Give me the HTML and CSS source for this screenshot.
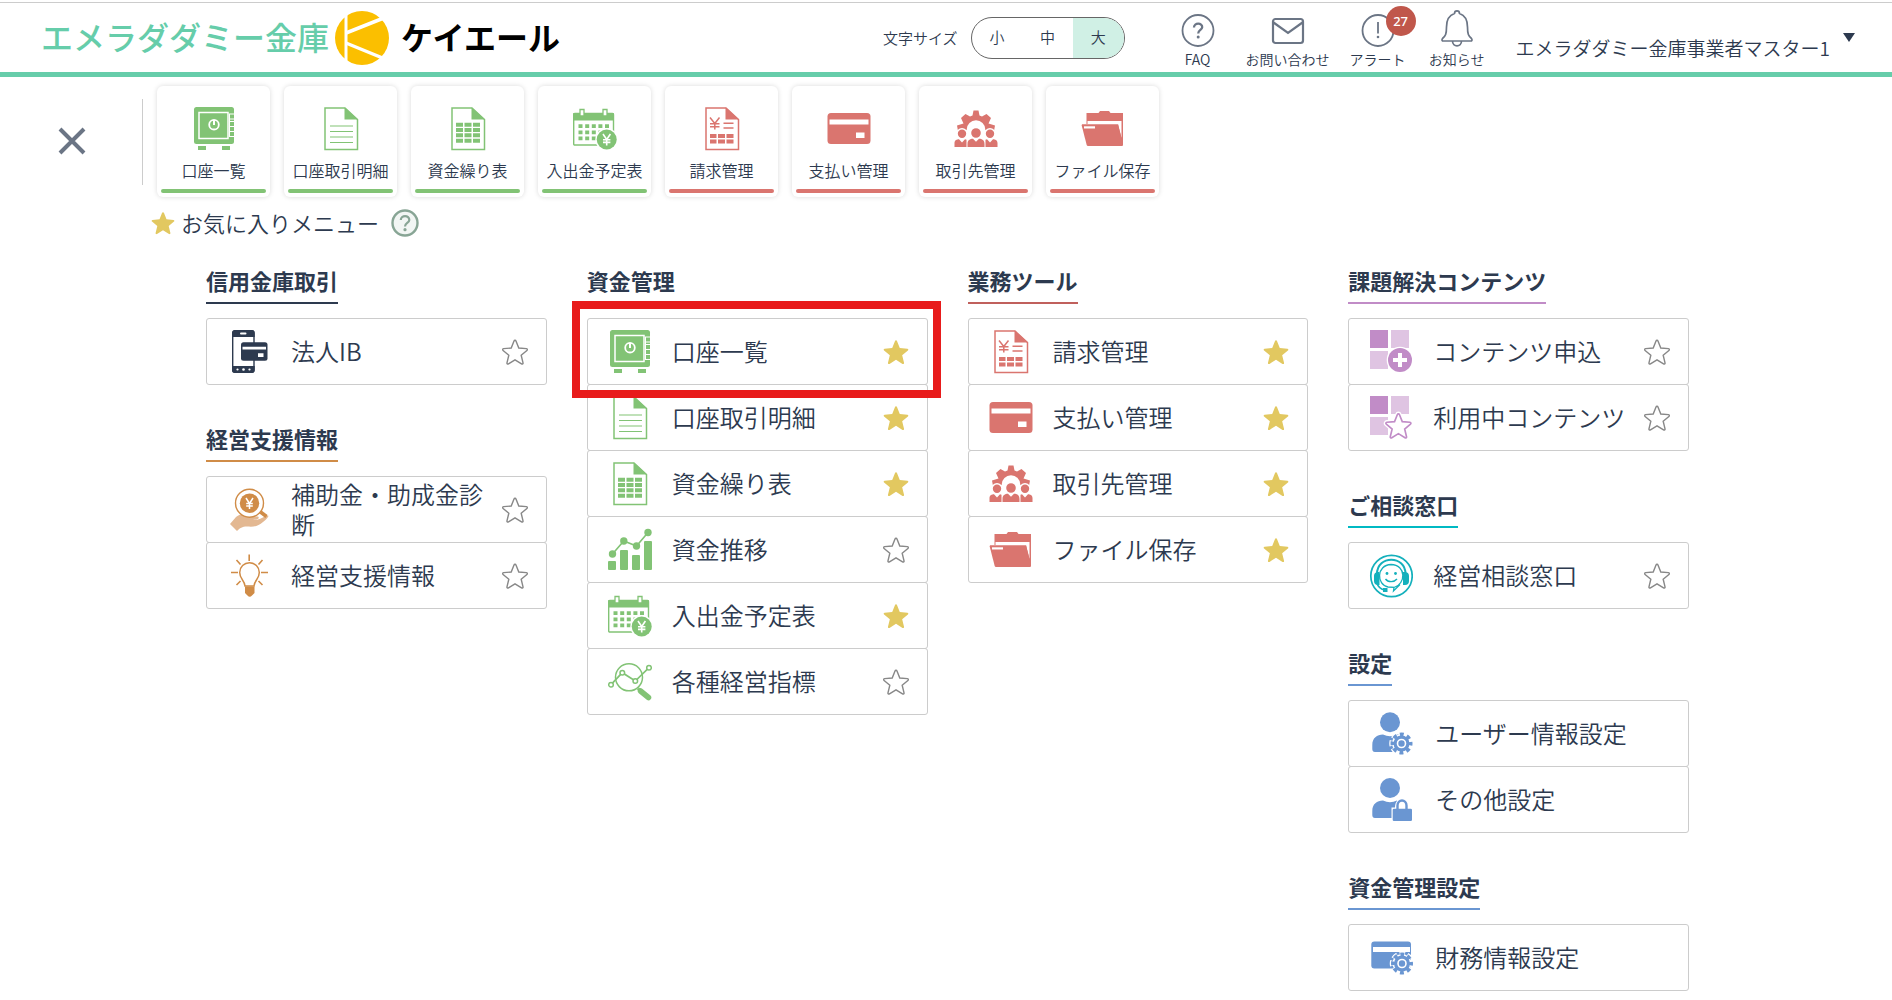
FILE: index.html
```html
<!DOCTYPE html>
<html lang="ja">
<head>
<meta charset="utf-8">
<title>ケイエール</title>
<meta name="viewport" content="width=device-width, initial-scale=1">
<link rel="stylesheet" href="styles.css">
</head>
<body>
<svg class="sprite" aria-hidden="true">
  <defs>
    <g id="sheet">
      <path d="M6 1H26L38.500 12.500V42.500H6Z" fill="#fff" stroke="currentColor" stroke-width="1.500"/>
      <path d="M25.500 0.500V12.500H39Z" fill="currentColor"/>
    </g>
    <g id="gear">
      <circle r="9.500" fill="#fff"/>
      <circle r="9.500" fill="none" stroke="#fff" stroke-width="5.500" stroke-dasharray="5 2.460" stroke-dashoffset="2.500"/>
      <circle r="8" fill="currentColor"/>
      <circle r="9" fill="none" stroke="currentColor" stroke-width="4" stroke-dasharray="3.800 3.268" stroke-dashoffset="1.900"/>
      <circle r="4" fill="none" stroke="#fff" stroke-width="1.600"/>
    </g>
    <path id="star-shape" d="M12 1.200C12.500 1.200 12.800 1.500 13 2L15.500 8.300L22.500 8.900C23.400 9 23.700 10 23 10.600L17.700 15L19.400 22C19.600 22.900 18.800 23.400 18 23L12 19.200L6 23C5.200 23.400 4.400 22.900 4.600 22L6.300 15L1 10.600C0.300 10 0.600 9 1.500 8.900L8.500 8.300L11 2C11.200 1.500 11.500 1.200 12 1.200Z"/>
  </defs>
  <symbol id="i-safe" viewBox="0 0 44 44">
    <path d="M6 39H14V43H6ZM30 39H38V43H30Z" fill="currentColor"/>
    <rect x="2" y="0" width="40" height="37" rx="2.500" fill="currentColor"/>
    <rect x="7" y="5.500" width="29" height="26" fill="none" stroke="#fff" stroke-width="1.500"/>
    <path d="M37 7H42M37 12H42M37 14.500H42M37 19.500H42M37 24.500H42M37 29.500H42M37.500 7V29.500" stroke="#fff" stroke-width="1"/>
    <circle cx="22" cy="17.700" r="4.800" fill="none" stroke="#fff" stroke-width="1.800"/>
    <path d="M22 13V18" stroke="#fff" stroke-width="2"/>
  </symbol>
  <symbol id="i-statement" viewBox="0 0 44 44">
    <use href="#sheet"/>
    <path d="M11 19H34M11 24.500H34M11 30H34M11 35.500H34" stroke="currentColor" stroke-width="1.200"/>
  </symbol>
  <symbol id="i-table" viewBox="0 0 44 44">
    <use href="#sheet"/>
    <path d="M10 15.700h7v4h-7zM18.500 15.700h7v4h-7zM27 15.700h7v4h-7zM10 21h7v4h-7zM18.500 21h7v4h-7zM27 21h7v4h-7zM10 26.300h7v4h-7zM18.500 26.300h7v4h-7zM27 26.300h7v4h-7zM10 31.700h7v4h-7zM18.500 31.700h7v4h-7zM27 31.700h7v4h-7z" fill="currentColor"/>
  </symbol>
  <symbol id="i-invoice" viewBox="0 0 44 44">
    <use href="#sheet"/>
    <path d="M10 10.500L14.800 16.500L19.500 10.500M14.800 16.500V22.500M10 16.800H19.500M10 19.800H19.500" fill="none" stroke="currentColor" stroke-width="1.500"/>
    <path d="M23.500 16.200H33.500M23.500 21H33.500" stroke="currentColor" stroke-width="1.400"/>
    <path d="M10 27h6.500v4h-6.500zM18 27h7v4h-7zM26.500 27h7v4h-7zM10 32.500h6.500v4h-6.500zM18 32.500h7v4h-7zM26.500 32.500h7v4h-7z" fill="currentColor"/>
  </symbol>
  <symbol id="i-calendar" viewBox="0 0 44 44">
    <rect x="0.700" y="6.500" width="39.800" height="31.500" rx="1" fill="#fff" stroke="currentColor" stroke-width="1.400"/>
    <rect x="0" y="6" width="41" height="7.500" rx="1" fill="currentColor"/>
    <path d="M7 2.500h4v6.500h-4zM30 2.500h4v6.500h-4z" fill="#fff" stroke="currentColor" stroke-width="1.300"/>
    <path d="M5.500 17.200h4v3.800h-4zM12.200 17.200h4v3.800h-4zM18.800 17.200h4v3.800h-4zM25.400 17.200h4v3.800h-4zM32 17.200h4v3.800h-4zM5.500 23.500h4v3.800h-4zM12.200 23.500h4v3.800h-4zM18.800 23.500h4v3.800h-4zM25.400 23.500h4v3.800h-4zM5.500 29.500h4v3.800h-4zM12.200 29.500h4v3.800h-4zM18.800 29.500h4v3.800h-4z" fill="currentColor"/>
    <circle cx="33.700" cy="32.500" r="11.300" fill="#fff"/>
    <circle cx="33.700" cy="32.500" r="10" fill="currentColor"/>
    <path d="M30 27L33.700 32.500L37.400 27M33.700 32.500V38.500M30 32.700H37.400M30 35.400H37.400" fill="none" stroke="#fff" stroke-width="1.600"/>
  </symbol>
  <symbol id="i-trend" viewBox="0 0 44 44">
    <g fill="currentColor">
      <rect x="0" y="33" width="8" height="9" rx="1"/><rect x="12" y="22" width="8" height="20" rx="1"/>
      <rect x="24" y="27" width="8" height="15" rx="1"/><rect x="36" y="13" width="8" height="29" rx="1"/>
      <circle cx="4.500" cy="26" r="3.700"/><circle cx="15.800" cy="13" r="3.700"/><circle cx="28.500" cy="18" r="3.700"/><circle cx="40" cy="4.500" r="3.700"/>
    </g>
    <path d="M4.500 26L15.800 13L28.500 18L40 4.500" fill="none" stroke="currentColor" stroke-width="1.600"/>
  </symbol>
  <symbol id="i-analysis" viewBox="0 0 44 44">
    <circle cx="21" cy="17.300" r="13.500" fill="none" stroke="currentColor" stroke-width="1.500"/>
    <path d="M30 28.500L33 31.500" stroke="currentColor" stroke-width="3"/>
    <path d="M32.500 31L40.500 37.500" stroke="currentColor" stroke-width="5.500" stroke-linecap="round"/>
    <path d="M3 24.700L14.300 12.700L27.300 21L41 7.700" fill="none" stroke="currentColor" stroke-width="1.700"/>
    <g fill="#fff" stroke="currentColor" stroke-width="1.500"><circle cx="3" cy="24.700" r="2.300"/><circle cx="14.300" cy="12.700" r="2.300"/><circle cx="27.300" cy="21" r="2.300"/><circle cx="41" cy="7.700" r="2.300"/></g>
  </symbol>
  <symbol id="i-card" viewBox="0 0 44 44">
    <rect x="0.500" y="6" width="43" height="31" rx="3.500" fill="currentColor"/>
    <path d="M2.500 12.500H41.500V17.500H2.500ZM29 25.500H37.500V31H29Z" fill="#fff"/>
  </symbol>
  <symbol id="i-team" viewBox="0 0 44 44">
    <path d="M4 24L3 18.500L9.500 16.500L7 11L11.500 7L16 9.500L18.500 8.500L19.500 3.500H24.500L25.500 8.500L28 9.500L32.500 7L37 11L34.500 16.500L41 18.500L40 24Z" fill="currentColor"/>
    <circle cx="22" cy="22.500" r="9.300" fill="#fff"/>
    <rect x="0" y="23" width="44" height="21" fill="#fff"/>
    <g fill="currentColor" stroke="#fff" stroke-width="1.600">
      <circle cx="8" cy="26.800" r="5"/><circle cx="36" cy="26.800" r="5"/><circle cx="22" cy="26" r="5.600"/>
    </g>
    <g fill="currentColor">
      <path d="M0.500 40V36C0.500 33 3 32.500 5 32.300L8 35.500L11 32.300L12.500 32.800V40Z"/>
      <path d="M31.500 40V32.800L33 32.300L36 35.500L39 32.300C41 32.500 43.500 33 43.500 36V40Z"/>
      <path d="M13.500 40V37C13.500 33 16 32 19 31.800L22 34.800L25 31.800C28 32 30.500 33 30.500 37V40Z"/>
    </g>
  </symbol>
  <symbol id="i-folder" viewBox="0 0 44 44">
    <path d="M5.500 17V6H17.500L19 4H28L29.500 6H42V38Q42 39 41 39H37V17Z" fill="currentColor"/>
    <path d="M6.500 14H40.500V31L37 17H6.500Z" fill="#fff"/>
    <path d="M1 17.300H37L41 33V39H7Q6 39 5.700 38L0.700 18.500Z" fill="currentColor"/>
    <path d="M3 19.300H14V21.500H3Z" fill="#fff"/>
  </symbol>
  <symbol id="i-phone" viewBox="0 0 44 44">
    <rect x="5.700" y="0.700" width="21.300" height="41.600" rx="2.500" fill="#fff" stroke="currentColor" stroke-width="1.400"/>
    <path d="M5 7V3Q5 0 8 0H24.700Q27.700 0 27.700 3V7ZM5 36V40Q5 43 8 43H24.700Q27.700 43 27.700 40V36Z" fill="currentColor"/>
    <rect x="13" y="2.500" width="6.500" height="2" rx="1" fill="#fff"/>
    <circle cx="10.500" cy="39.500" r="1.100" fill="#fff"/><circle cx="16.500" cy="39.500" r="1.300" fill="#fff"/><circle cx="22.500" cy="39.500" r="1.100" fill="#fff"/>
    <rect x="14" y="12.300" width="26.500" height="18.500" rx="2.500" fill="currentColor"/>
    <path d="M15.500 16.700H39V19.500H15.500ZM31 23.300H36.500V27H31Z" fill="#fff"/>
  </symbol>
  <symbol id="i-subsidy" viewBox="0 0 44 44">
    <path d="M3 36L9 29C14 25 20 26 23 28.500H31C33 30 31 32 26 31.500C32 33 36 28.500 41 27.500C42.500 28 40 31 36 34C31 38.500 27 39 20 38.500C15 38.500 13 40 10 43Z" fill="#e3b892"/>
    <circle cx="22.500" cy="15.200" r="14" fill="#fff" stroke="currentColor" stroke-width="1.400"/>
    <path d="M33.500 24L39.500 28.500" stroke="currentColor" stroke-width="3.600"/>
    <circle cx="22.500" cy="15.200" r="9.700" fill="currentColor"/>
    <path d="M19 10L22.500 15.500L26 10M22.500 15.500V21M19.200 15.500H25.800M19.200 18H25.800" fill="none" stroke="#fff" stroke-width="1.500"/>
  </symbol>
  <symbol id="i-bulb" viewBox="0 0 44 44">
    <path d="M18 32C17.500 26 12.700 25 12.700 18.500A9.800 9.800 0 0 1 32.300 18.500C32.300 25 27.500 26 27 32Z" fill="none" stroke="currentColor" stroke-width="1.500"/>
    <path d="M18 32.500H27.500V39L25 41.500Q22.700 44 20.500 41.500L18 39Z" fill="currentColor"/>
    <path d="M22.200 0.500V7M4 18.500H11M34 18.500H41M9.500 6L13.500 10.500M35.500 6L31.500 10.500M9.500 31L13.500 27M35.500 31L31.500 27" stroke="currentColor" stroke-width="1.600"/>
  </symbol>
  <symbol id="i-apply" viewBox="0 0 44 44">
    <path d="M1 0H19V18H1Z" fill="currentColor"/><path d="M22 0H40V18H22ZM1 21H19V39H1Z" fill="#dfc4e2"/>
    <circle cx="31" cy="30" r="13.300" fill="#fff"/><circle cx="31" cy="30" r="12" fill="currentColor"/>
    <path d="M31 23V37M24 30H38" stroke="#fff" stroke-width="4"/>
  </symbol>
  <symbol id="i-inuse" viewBox="0 0 44 44">
    <path d="M1 0H19V18H1Z" fill="currentColor"/><path d="M22 0H40V18H22ZM1 21H19V39H1Z" fill="#dfc4e2"/>
    <use href="#star-shape" transform="translate(16.200 16.500) scale(1.100)" fill="#fff" stroke="#fff" stroke-width="4"/>
    <use href="#star-shape" transform="translate(16.200 16.500) scale(1.100)" fill="#fff" stroke="currentColor" stroke-width="1.500"/>
  </symbol>
  <symbol id="i-consult" viewBox="0 0 44 44">
    <g fill="none" stroke="currentColor">
      <circle cx="22.500" cy="22" r="20.700" stroke-width="1.700"/>
      <path d="M8 20C8 1 36.500 1 36.500 20" stroke-width="2"/>
      <path d="M25 33.500C37 30 37.500 11 22 10.500C7 11 7.500 31 19 33L25 33.300L24.500 37L31 30.500" stroke-width="1.300"/>
      <path d="M16.500 25C19 28.500 25 28.500 28 25" stroke-width="1.400"/>
      <path d="M7.500 28C9 33 12 35.500 16 36" stroke-width="1.600"/>
    </g>
    <path d="M10.500 18H8.500Q5 18.500 5 22V27Q5 31 9 31H10.500ZM34 18H36.500Q40 18.500 40 22V27Q40 31 36 31H34Z" fill="currentColor"/>
    <rect x="14" y="34" width="4.500" height="4" fill="currentColor"/>
    <circle cx="18" cy="19.500" r="1.400" fill="currentColor"/><circle cx="26.500" cy="19.500" r="1.400" fill="currentColor"/>
  </symbol>
  <symbol id="i-user" viewBox="0 0 44 44">
    <circle cx="21" cy="10.300" r="10" fill="currentColor"/>
    <path d="M3.300 37V33C3.300 26 8 22.500 14 22.500Q21 26 28 22.500C34 23 36 27 36 31V40H6Q3.300 40 3.300 37Z" fill="currentColor"/>
    <use href="#gear" transform="translate(32.500 31.500)"/>
  </symbol>
  <symbol id="i-lock" viewBox="0 0 44 44">
    <circle cx="21" cy="10" r="10" fill="currentColor"/>
    <path d="M3.300 37V33C3.300 26 8 22.500 14 22.500Q21 26 28 22.500V40H6Q3.300 40 3.300 37Z" fill="currentColor"/>
    <path d="M22.500 44V29.500H26C26 17.500 40 17.500 40 29.500H44V44Z" fill="#fff"/>
    <rect x="23.700" y="30.700" width="19.300" height="12.300" rx="1.200" fill="currentColor"/>
    <path d="M28.500 31V27.500C28.500 20.800 37.500 20.800 37.500 27.500V31" fill="none" stroke="currentColor" stroke-width="2.400"/>
  </symbol>
  <symbol id="i-finance" viewBox="0 0 44 44">
    <rect x="2.300" y="5.500" width="39.700" height="27" rx="3" fill="currentColor"/>
    <path d="M4 11H41V16H4Z" fill="#fff"/>
    <use href="#gear" transform="translate(33 27.500)"/>
  </symbol>
  <symbol id="i-star" viewBox="0 0 24 24"><use href="#star-shape"/></symbol>
</svg>

<header class="topbar">
  <div class="brand">
    <span class="brand-bank">エメラダダミー金庫</span>
    <svg class="brand-mark" viewBox="0 0 54 54" aria-hidden="true">
      <circle cx="27" cy="27" r="27" fill="#fbbf00"/>
      <path d="M11 0V54" stroke="#fff" stroke-width="3"/>
      <path d="M11 22L50 6.500M11 32L50 48" stroke="#fff" stroke-width="3.500"/>
    </svg>
    <span class="brand-name">ケイエール</span>
  </div>
  <fieldset class="textsize">
    <legend class="textsize-label">文字サイズ</legend>
    <div class="textsize-group">
      <label class="textsize-option"><input type="radio" name="size"><span>小</span></label>
      <label class="textsize-option"><input type="radio" name="size"><span>中</span></label>
      <label class="textsize-option"><input type="radio" name="size" checked><span>大</span></label>
    </div>
  </fieldset>
  <nav class="tools">
    <a class="tool" href="#faq">
      <svg class="tool-icon" viewBox="0 0 38 38"><circle cx="19" cy="20.500" r="15.500" fill="none" stroke="currentColor" stroke-width="1.800"/><path d="M15 17.500C15 12.500 23.500 12.500 23.200 17.300C23 20 19.200 19.800 19.200 23.500" fill="none" stroke="currentColor" stroke-width="2.300"/><circle cx="19.200" cy="27" r="1.500" fill="currentColor"/></svg>
      <span>FAQ</span></a>
    <a class="tool" href="#contact">
      <svg class="tool-icon" viewBox="0 0 38 38"><rect x="4" y="9" width="30" height="24" rx="2.500" fill="none" stroke="currentColor" stroke-width="2.200"/><path d="M4.500 12.500L19 23L33.500 12.500" fill="none" stroke="currentColor" stroke-width="2.200"/></svg>
      <span>お問い合わせ</span></a>
    <a class="tool" href="#alert">
      <svg class="tool-icon" viewBox="0 0 38 38"><circle cx="19" cy="20.500" r="15.500" fill="none" stroke="currentColor" stroke-width="1.800"/><path d="M19 12V23.500" stroke="currentColor" stroke-width="1.800"/><circle cx="19" cy="27" r="1.300" fill="currentColor"/></svg>
      <span>アラート</span><b class="badge">27</b></a>
    <a class="tool" href="#news">
      <svg class="tool-icon" viewBox="0 0 38 38"><path d="M16.500 3.500C16.500 0 21.500 0 21.500 3.500C27.500 5.500 29.500 10 29.500 17C29.500 24 30.500 26 33.500 28.500C34.500 30 34 31 32.500 31H5.500C4 31 3.500 30 4.500 28.500C7.500 26 8.500 24 8.500 17C8.500 10 10.500 5.500 16.500 3.500ZM14.500 31C14.500 37.500 23.500 37.500 23.500 31" fill="none" stroke="currentColor" stroke-width="1.700"/></svg>
      <span>お知らせ</span></a>
  </nav>
  <button class="account" type="button"><span class="account-name">エメラダダミー金庫事業者マスター1</span><span class="caret"></span></button>
</header>

<main>
  <section class="shortcuts">
    <button class="close" type="button" aria-label="閉じる"><svg viewBox="0 0 28 28"><path d="M2 2L26 26M26 2L2 26" stroke="currentColor" stroke-width="4"/></svg></button>
    <nav class="cards">
      <a class="card green" href="#accounts"><svg><use href="#i-safe"/></svg><span class="card-label">口座一覧</span></a>
      <a class="card green" href="#statements"><svg><use href="#i-statement"/></svg><span class="card-label">口座取引明細</span></a>
      <a class="card green" href="#cashflow"><svg><use href="#i-table"/></svg><span class="card-label">資金繰り表</span></a>
      <a class="card green" href="#schedule"><svg><use href="#i-calendar"/></svg><span class="card-label">入出金予定表</span></a>
      <a class="card red" href="#invoices"><svg><use href="#i-invoice"/></svg><span class="card-label">請求管理</span></a>
      <a class="card red" href="#payments"><svg><use href="#i-card"/></svg><span class="card-label">支払い管理</span></a>
      <a class="card red" href="#partners"><svg><use href="#i-team"/></svg><span class="card-label">取引先管理</span></a>
      <a class="card red" href="#files"><svg><use href="#i-folder"/></svg><span class="card-label">ファイル保存</span></a>
    </nav>
  </section>

  <div class="favorites">
    <svg class="favorites-star" aria-hidden="true"><use href="#i-star"/></svg>
    <span class="favorites-title">お気に入りメニュー</span>
    <button class="help" type="button" aria-label="ヘルプ"><svg viewBox="0 0 28 28"><circle cx="14" cy="14" r="12.500" fill="#f2f6f4" stroke="currentColor" stroke-width="2.400"/><path d="M9.800 11C9.800 5.800 18.500 5.800 18.300 11C18.200 14 14 14 14 17.500" fill="none" stroke="currentColor" stroke-width="2.200"/><circle cx="14" cy="20.700" r="1.600" fill="currentColor"/></svg></button>
  </div>

  <div class="menu">
    <div class="column">
      <section class="group navy">
        <h2>信用金庫取引</h2>
        <ul>
          <li><a href="#ib"><svg><use href="#i-phone"/></svg><span>法人IB</span></a><button class="fav" type="button" aria-label="お気に入り" aria-pressed="false"><svg><use href="#i-star"/></svg></button></li>
        </ul>
      </section>
      <section class="group orange">
        <h2>経営支援情報</h2>
        <ul>
          <li><a href="#subsidy"><svg><use href="#i-subsidy"/></svg><span>補助金・助成金診断</span></a><button class="fav" type="button" aria-label="お気に入り" aria-pressed="false"><svg><use href="#i-star"/></svg></button></li>
          <li><a href="#support"><svg><use href="#i-bulb"/></svg><span>経営支援情報</span></a><button class="fav" type="button" aria-label="お気に入り" aria-pressed="false"><svg><use href="#i-star"/></svg></button></li>
        </ul>
      </section>
    </div>
    <div class="column">
      <section class="group green">
        <h2>資金管理</h2>
        <ul>
          <li class="highlight"><a href="#accounts"><svg><use href="#i-safe"/></svg><span>口座一覧</span></a><button class="fav" type="button" aria-label="お気に入り" aria-pressed="true"><svg><use href="#i-star"/></svg></button></li>
          <li><a href="#statements"><svg><use href="#i-statement"/></svg><span>口座取引明細</span></a><button class="fav" type="button" aria-label="お気に入り" aria-pressed="true"><svg><use href="#i-star"/></svg></button></li>
          <li><a href="#cashflow"><svg><use href="#i-table"/></svg><span>資金繰り表</span></a><button class="fav" type="button" aria-label="お気に入り" aria-pressed="true"><svg><use href="#i-star"/></svg></button></li>
          <li><a href="#trend"><svg><use href="#i-trend"/></svg><span>資金推移</span></a><button class="fav" type="button" aria-label="お気に入り" aria-pressed="false"><svg><use href="#i-star"/></svg></button></li>
          <li><a href="#schedule"><svg><use href="#i-calendar"/></svg><span>入出金予定表</span></a><button class="fav" type="button" aria-label="お気に入り" aria-pressed="true"><svg><use href="#i-star"/></svg></button></li>
          <li><a href="#indicators"><svg><use href="#i-analysis"/></svg><span>各種経営指標</span></a><button class="fav" type="button" aria-label="お気に入り" aria-pressed="false"><svg><use href="#i-star"/></svg></button></li>
        </ul>
      </section>
    </div>
    <div class="column">
      <section class="group red">
        <h2>業務ツール</h2>
        <ul>
          <li><a href="#invoices"><svg><use href="#i-invoice"/></svg><span>請求管理</span></a><button class="fav" type="button" aria-label="お気に入り" aria-pressed="true"><svg><use href="#i-star"/></svg></button></li>
          <li><a href="#payments"><svg><use href="#i-card"/></svg><span>支払い管理</span></a><button class="fav" type="button" aria-label="お気に入り" aria-pressed="true"><svg><use href="#i-star"/></svg></button></li>
          <li><a href="#partners"><svg><use href="#i-team"/></svg><span>取引先管理</span></a><button class="fav" type="button" aria-label="お気に入り" aria-pressed="true"><svg><use href="#i-star"/></svg></button></li>
          <li><a href="#files"><svg><use href="#i-folder"/></svg><span>ファイル保存</span></a><button class="fav" type="button" aria-label="お気に入り" aria-pressed="true"><svg><use href="#i-star"/></svg></button></li>
        </ul>
      </section>
    </div>
    <div class="column">
      <section class="group purple">
        <h2>課題解決コンテンツ</h2>
        <ul>
          <li><a href="#apply"><svg><use href="#i-apply"/></svg><span>コンテンツ申込</span></a><button class="fav" type="button" aria-label="お気に入り" aria-pressed="false"><svg><use href="#i-star"/></svg></button></li>
          <li><a href="#inuse"><svg><use href="#i-inuse"/></svg><span>利用中コンテンツ</span></a><button class="fav" type="button" aria-label="お気に入り" aria-pressed="false"><svg><use href="#i-star"/></svg></button></li>
        </ul>
      </section>
      <section class="group teal">
        <h2>ご相談窓口</h2>
        <ul>
          <li><a href="#consult"><svg><use href="#i-consult"/></svg><span>経営相談窓口</span></a><button class="fav" type="button" aria-label="お気に入り" aria-pressed="false"><svg><use href="#i-star"/></svg></button></li>
        </ul>
      </section>
      <section class="group blue">
        <h2>設定</h2>
        <ul>
          <li><a href="#user"><svg><use href="#i-user"/></svg><span>ユーザー情報設定</span></a></li>
          <li><a href="#other"><svg><use href="#i-lock"/></svg><span>その他設定</span></a></li>
        </ul>
      </section>
      <section class="group blue">
        <h2>資金管理設定</h2>
        <ul>
          <li><a href="#finance"><svg><use href="#i-finance"/></svg><span>財務情報設定</span></a></li>
        </ul>
      </section>
    </div>
  </div>
</main>
</body>
</html>
```
FILE: styles.css
```css
* { box-sizing: border-box; }

body {
  margin: 0;
  padding-top: 2px;
  background: #fff;
  color: #2d3a4f;
  font-family: "Noto Sans CJK JP", "Noto Sans", sans-serif;
  font-weight: 350;
}

a { color: inherit; text-decoration: none; }
button { padding: 0; border: 0; background: none; color: inherit; font: inherit; cursor: pointer; }
svg { display: block; flex: none; }
.sprite { position: absolute; width: 0; height: 0; }

.green { --tone: #82c375; }
.red { --tone: #da756f; }
.navy { --tone: #2d3a4f; }
.orange { --tone: #d08c47; }
.purple { --tone: #c18cc7; }
.teal { --tone: #14b0bc; }
.blue { --tone: #6a96d2; }

/* Top bar */
.topbar {
  display: flex;
  align-items: center;
  height: 75px;
  padding: 0 37px 0 41px;
  border-top: 1px solid #ccc;
  border-bottom: 5px solid #66cdaa;
}
.brand { display: flex; align-items: center; margin-right: auto; font-size: 32px; line-height: 40px; white-space: nowrap; }
.brand span { padding-bottom: 4px; }
.brand-bank { color: #66cdaa; font-weight: 500; }
.brand-mark { width: 54px; height: 54px; margin: 0 12px 0 6px; }
.brand-name { color: #000; font-weight: 700; }

.textsize { display: flex; align-items: center; margin: 0 42px 0 0; padding: 0; border: 0; font-size: 15px; white-space: nowrap; }
.textsize-label { float: left; padding: 0; margin-right: 13px; }
.textsize-group { display: flex; width: 154px; height: 42px; border: 1px solid #666; border-radius: 21px; overflow: hidden; }
.textsize-option { flex: 1; display: flex; }
.textsize-option input { position: absolute; opacity: 0; }
.textsize-option span { flex: 1; display: flex; align-items: center; justify-content: center; padding-bottom: 2px; }
.textsize-option input:checked + span { background: #d0f0e5; }

.tools { display: flex; gap: 17px; margin-right: 28px; padding-top: 2px; }
.tool { position: relative; display: flex; flex-direction: column; align-items: center; min-width: 62px; font-size: 14px; line-height: 18px; white-space: nowrap; }
.tool-icon { width: 38px; height: 38px; margin-bottom: 2px; color: #6b7585; }
.badge {
  position: absolute;
  top: -4px;
  left: 39px;
  width: 30px;
  height: 30px;
  border-radius: 50%;
  background: #c0574b;
  color: #fff;
  font-family: "Noto Sans", sans-serif;
  font-size: 13px;
  font-weight: 500;
  line-height: 30px;
  text-align: center;
}

.account { display: flex; align-items: flex-start; gap: 13px; font-size: 19px; line-height: 28px; white-space: nowrap; }
.account-name { padding-top: 20px; }
.caret { margin-top: 19px; border: 6px solid transparent; border-top: 9px solid #2d3a4f; border-bottom: 0; }

/* Favourite shortcuts */
.shortcuts { display: flex; align-items: center; padding-top: 9px; }
.close { width: 142px; padding: 0 56px 2px 58px; color: #6b7585; }
.close svg { width: 28px; height: 28px; }
.cards { display: flex; align-items: center; gap: 14px; }
.cards::before { content: ""; width: 1px; height: 86px; background: #ccc; }
.card {
  display: flex;
  flex-direction: column;
  align-items: center;
  width: 113px;
  padding: 21px 4px 4px;
  border-radius: 6px;
  box-shadow: 0 0 5px rgba(0, 0, 0, .15);
  font-size: 16px;
  line-height: 24px;
  white-space: nowrap;
}
.card svg { width: 44px; height: 44px; color: var(--tone); }
.card-label { margin-top: 7px; }
.card::after { content: ""; align-self: stretch; height: 4px; margin-top: 7px; border-radius: 2px; background: var(--tone); }

.favorites { display: flex; align-items: center; height: 30px; margin-top: 11px; padding-left: 151px; font-size: 22px; line-height: 28px; white-space: nowrap; }
.favorites-star { width: 24px; height: 24px; margin-right: 6px; fill: #e2c860; }
.favorites-title { padding-bottom: 2px; }
.help { margin-left: 12px; color: #88a595; }
.help svg { width: 28px; height: 28px; }

/* Menu */
.menu { display: grid; grid-template-columns: repeat(4, minmax(0, 1fr)); gap: 40px; padding: 29px 203px 8px 206px; }
.column { display: flex; flex-direction: column; gap: 40px; }
.group { display: flex; flex-direction: column; align-items: flex-start; }
.group h2 { margin: 0 0 14px; padding-bottom: 9px; border-bottom: 2px solid var(--tone); font-size: 22px; font-weight: 700; line-height: 26px; }
.group.red h2 { border-color: #c0605c; }
.group.teal h2 { border-color: #00b9c3; }
.group ul { align-self: stretch; margin: 0; padding: 0; list-style: none; }
.group li { position: relative; display: flex; align-items: center; height: 67px; padding: 0 18px 0 20px; border: 1px solid #ccc; border-radius: 3px; }
.group li + li { margin-top: -1px; }
.group li a { flex: 1; display: flex; align-items: center; gap: 20px; min-width: 0; font-size: 24px; line-height: 30px; }
.group li a svg { width: 44px; height: 44px; color: var(--tone); }
.group li a span { padding-bottom: 2px; }
.group.blue li a { gap: 22px; }
.fav { margin-left: 5px; }
.fav svg { width: 26px; height: 26px; fill: none; stroke: #888; stroke-width: 1.3px; }
.fav[aria-pressed="true"] svg { fill: #e2c860; stroke: none; }
.highlight::after { content: ""; position: absolute; z-index: 1; inset: -18px -14px -14px -16px; border: 8px solid #e81b1b; pointer-events: none; }
```
